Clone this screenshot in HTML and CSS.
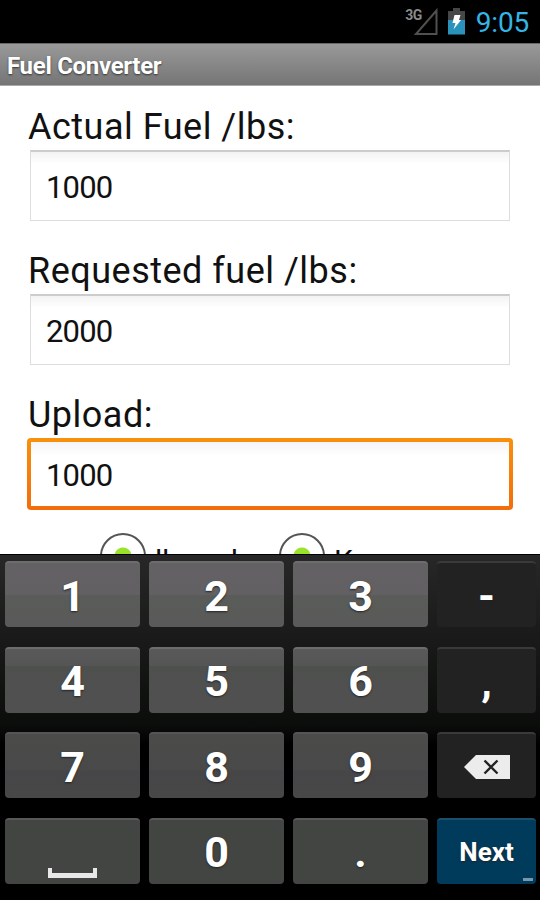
FILE: index.html
```html
<!DOCTYPE html>
<html lang="en">
<head>
    <meta charset="UTF-8">
    <meta name="viewport" content="width=device-width, initial-scale=1.0">
    <title>Fuel Converter</title>
    <link rel="stylesheet" href="styles.css">
</head>
<body>

    <div class="status-bar">
        <span class="network">3G</span>
        <svg class="signal" width="24" height="28" viewBox="0 0 24 28">
            <path d="M2 26 L22.5 26 L22.5 2.5 Z" fill="none" stroke="#505050" stroke-width="2"/>
        </svg>
        <svg class="battery" width="17" height="27" viewBox="0 0 17 27">
            <path d="M0 3 H5 V0 H12 V3 H17 V13 H0 Z" fill="#474747"/>
            <rect x="0" y="12" width="17" height="14.5" fill="#2a93bb"/>
            <path d="M6.5 7 H12.5 L11 12 H13 L5.5 21.5 L7.5 15 H4.5 Z" fill="#fff"/>
        </svg>
        <span class="clock">9:05</span>
    </div>

    <h1 class="title-bar">Fuel Converter</h1>

    <div class="content">
        <div class="field">
            <label for="actual">Actual Fuel /lbs:</label>
            <input type="text" id="actual" value="1000">
        </div>
        <div class="field">
            <label for="requested">Requested fuel /lbs:</label>
            <input type="text" id="requested" value="2000">
        </div>
        <div class="field active">
            <label for="upload">Upload:</label>
            <input type="text" id="upload" value="1000">
        </div>
        <div class="units">
            <div class="unit"><span class="radio"></span><span class="unit-name">lbs or l</span></div>
            <div class="unit"><span class="radio"></span><span class="unit-name">Kg</span></div>
        </div>
    </div>

    <div class="keyboard">
        <div class="key top">1</div>
        <div class="key top">2</div>
        <div class="key top">3</div>
        <div class="key dark">-</div>

        <div class="key upper">4</div>
        <div class="key upper">5</div>
        <div class="key upper">6</div>
        <div class="key dark">,</div>

        <div class="key lower">7</div>
        <div class="key lower">8</div>
        <div class="key lower">9</div>
        <div class="key dark">
            <svg width="46" height="24" viewBox="0 0 46 24">
                <path d="M0 12 L12 0 H46 V24 H12 Z" fill="#ececec"/>
                <path d="M20.5 5.5 L33.5 18.5 M33.5 5.5 L20.5 18.5" stroke="#222" stroke-width="2.4" fill="none"/>
            </svg>
        </div>

        <div class="key bottom space">
            <svg width="49" height="10" viewBox="0 0 49 10">
                <path d="M0 0 H4 V5 H45 V0 H49 V10 H0 Z" fill="#e8e8e8"/>
            </svg>
        </div>
        <div class="key bottom">0</div>
        <div class="key bottom">.</div>
        <div class="key next">Next</div>
    </div>

</body>
</html>
```

FILE: styles.css
```css
* {
    box-sizing: border-box;
}
body {
    margin: 0;
    width: 540px;
    height: 900px;
    overflow: hidden;
    display: flex;
    flex-direction: column;
    font-family: Roboto, sans-serif;
    background-color: #fff;
    color: #111;
}

/* Status bar */
.status-bar {
    height: 43px;
    flex: none;
    display: flex;
    justify-content: flex-end;
    padding: 8px 11px 0 0;
    background-color: #000;
}
.network {
    font-size: 14px;
    font-weight: bold;
    line-height: 14px;
    color: #8a8a8a;
    letter-spacing: -0.5px;
    margin-right: -8px;
}
.battery {
    margin: 0 11px 0 10px;
}
.clock {
    font-size: 28px;
    line-height: 30px;
    color: #33b5e5;
    letter-spacing: -0.2px;
}
.title-bar {
    height: 43px;
    flex: none;
    margin: 0;
    padding-left: 7px;
    font-size: 24px;
    line-height: 44px;
    letter-spacing: -0.3px;
    color: #fff;
    text-shadow: 0 1px 2px #333;
    background: linear-gradient(#999, #757575);
    border-top: 1px solid #666;
    border-bottom: 1px solid #aaa;
}

/* Form */
.content {
    height: 468px;
    flex: none;
    overflow: hidden;
    padding: 18px 27px 0;
}
.field {
    height: 144px;
    padding: 0 3px;
}
.field label {
    display: block;
    height: 46px;
    margin-left: -2px;
    font-size: 36px;
    line-height: 46px;
    letter-spacing: 0.5px;
}
.field input {
    display: block;
    width: 480px;
    height: 71px;
    padding: 2px 0 0 15px;
    font-family: inherit;
    font-size: 31px;
    letter-spacing: -0.8px;
    color: #111;
    background: linear-gradient(#f3f3f3, #fff 12px);
    border: 1px solid #ddd;
    border-top: 2px solid #ccc;
    outline: none;
}
.field.active {
    height: 141px;
}
.active input {
    width: 486px;
    height: 72px;
    margin: 0 -3px;
    border: 4px solid transparent;
    border-radius: 4px;
    background: linear-gradient(#f5f5f8, #fff 14px) padding-box,
                linear-gradient(#f8910b, #f36c0c) border-box;
}
.units {
    display: flex;
    padding-left: 73px;
}
.unit {
    display: flex;
    align-items: center;
    width: 179px;
    height: 46px;
    gap: 9px;
    font-size: 30px;
    white-space: nowrap;
}
.unit-name {
    padding-top: 9px;
    word-spacing: -3px;
}
.radio {
    flex: none;
    width: 46px;
    height: 46px;
    border: 2px solid #555;
    border-radius: 50%;
    background: radial-gradient(circle, #9be22b 8px, #fff 9px);
}

/* Keyboard */
.keyboard {
    flex: 1;
    display: grid;
    grid-template-columns: 135px 135px 135px 99px;
    grid-auto-rows: 66px;
    gap: 19.6px 9px;
    padding: 6px 4px 0 5px;
    border-top: 1px solid #000;
    background: linear-gradient(#262726, #0b0d0b 170px, #000 190px);
}
.key {
    display: flex;
    align-items: center;
    justify-content: center;
    padding-top: 1px;
    font-size: 43px;
    line-height: 50px;
    font-weight: bold;
    color: #fff;
    border-radius: 4px;
    border-top: 2px solid #6d6d6d;
    text-shadow: 0 1px 2px #222;
}
.top {
    background: linear-gradient(#636163, #626063 50%, #5a5c59 50%, #595a59);
}
.upper {
    background: linear-gradient(#595959, #555 26%, #4e504e 26%, #505050);
}
.lower {
    border-top-color: #555;
    background: linear-gradient(#4b4c4a, #484948 55%, #464547 60%, #484848);
}
.bottom {
    border-top-color: #585858;
    background: #434542;
}
.dark {
    border-top-color: #3a3a3a;
    background: #222;
}
.space {
    align-items: flex-end;
    padding-bottom: 6px;
}
.next {
    position: relative;
    font-size: 26px;
    background: #003b5c;
    border-top-color: #1a4f6e;
}
.next::after {
    content: "";
    position: absolute;
    right: 3px;
    bottom: 3px;
    width: 10px;
    height: 3px;
    background: #7898aa;
}
```
